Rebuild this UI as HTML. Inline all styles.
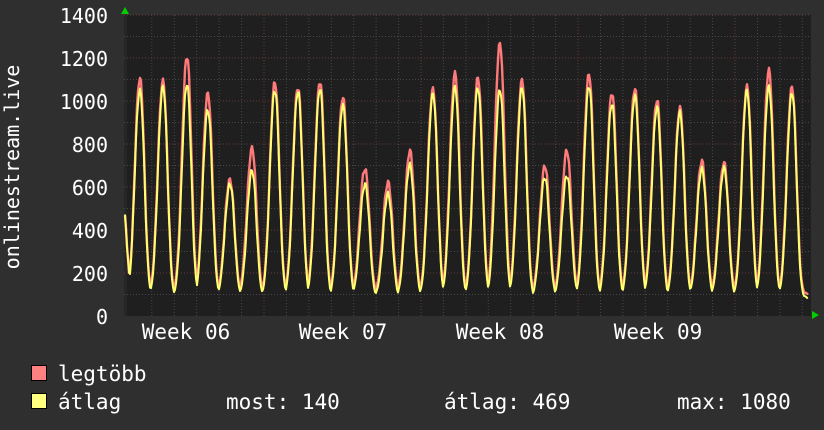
<!DOCTYPE html>
<html><head><meta charset="utf-8"><style>
body{margin:0;background:#2f2f2f;width:824px;height:430px;overflow:hidden}
svg{display:block}
text{font-family:"DejaVu Sans Mono","Liberation Mono",monospace;fill:#fff}
</style></head><body>
<svg id="s" width="824" height="430" xmlns="http://www.w3.org/2000/svg">
<rect width="824" height="430" fill="#2f2f2f"/>
<rect x="124" y="15" width="687" height="301" fill="#1f1f1f"/>
<rect x="124" y="15" width="3" height="301" fill="#262626"/>
<g id="grid"></g>
<path id="red" fill="none" stroke="#ff7a7a" stroke-width="2.4" stroke-linejoin="round"/>
<path id="yel" fill="none" stroke="#ffff70" stroke-width="2" stroke-linejoin="round"/>
<polygon points="121,14 125,7 129,14" fill="#00d000"/>
<polygon points="812,311 819,315 812,319" fill="#00d000"/>
<g font-size="20" text-anchor="end">
<text x="108" y="23">1400</text><text x="108" y="66">1200</text><text x="108" y="109">1000</text>
<text x="108" y="152">800</text><text x="108" y="195">600</text><text x="108" y="238">400</text>
<text x="108" y="281">200</text><text x="108" y="324">0</text>
</g>
<text transform="translate(19,167) rotate(-90)" font-size="20" text-anchor="middle">onlinestream.live</text>
<g font-size="21" text-anchor="middle">
<text x="186" y="339">Week 06</text><text x="343" y="339">Week 07</text>
<text x="500" y="339">Week 08</text><text x="658" y="339">Week 09</text>
</g>
<rect x="31.5" y="365.5" width="15" height="15" fill="#ff8080" stroke="#000"/>
<rect x="31.5" y="393.5" width="15" height="15" fill="#ffff80" stroke="#000"/>
<g font-size="21">
<text x="58" y="381">legtöbb</text>
<text x="58" y="409">átlag</text>
<text x="226" y="409">most: 140</text>
<text x="444" y="409">átlag: 469</text>
<text x="677" y="409">max: 1080</text>
</g>
</svg>
<script>
var g=document.getElementById('grid'),h='';
function Y(v){return 316-v*301/1400;}
for(var v=100;v<=1400;v+=100){var y=Y(v).toFixed(1);
h+='<line x1="124" x2="811" y1="'+y+'" y2="'+y+'" stroke="'+(v%200?'#484848':'#643838')+'" stroke-dasharray="1,2"/>';}
for(var k=-5;k<26;k++){var x=264+k*22.43;if(x<126||x>810)continue;var m=(k%7==0);
h+='<line y1="15" y2="316" x1="'+x.toFixed(1)+'" x2="'+x.toFixed(1)+'" stroke="'+(m?'#643838':'#484848')+'" stroke-dasharray="1,2"/>';}
g.innerHTML=h;
var px=[140,163,187,208,230,252,275,298,320,343,365,388,410,433,455,478,500,522,545,567,589,612,635,657,680,702,724,747,769,792];
var pr=[1100,1100,1200,1030,640,780,1080,1070,1090,1010,690,620,760,1060,1130,1100,1270,1100,690,770,1130,1030,1060,1010,960,720,720,1060,1140,1070];
var py=[1050,1070,1070,960,620,670,1050,1050,1050,980,620,560,700,1040,1060,1060,1060,1060,640,660,1070,980,1030,970,940,690,690,1040,1070,1040];
function val(x,arr,base){
 var best=base;
 var v0=470*Math.max(0,1-(x-125)/7);if(v0>best)best=v0;
 for(var i=0;i<px.length;i++){var d=(x-px[i]);var w=d<0?7:6;var t=Math.exp(-Math.pow(Math.abs(d)/w,2.2));
  var v=base+(arr[i]-base)*t; if(v>best)best=v;}
 return best;}
function path(arr,base,n){var d='';for(var x=125;x<=808;x+=1){var b=val(x,arr,base);var j=Math.sin(x*1.7+n)*12+Math.sin(x*0.37+n)*8;
 var v=b+j*(b>300?1:0.25);d+=(x==125?'M':'L')+x+','+Y(v).toFixed(1);}return d;}
document.getElementById('red').setAttribute('d',path(pr,105,1));
document.getElementById('yel').setAttribute('d',path(py,88,2));
</script>
</body></html>
